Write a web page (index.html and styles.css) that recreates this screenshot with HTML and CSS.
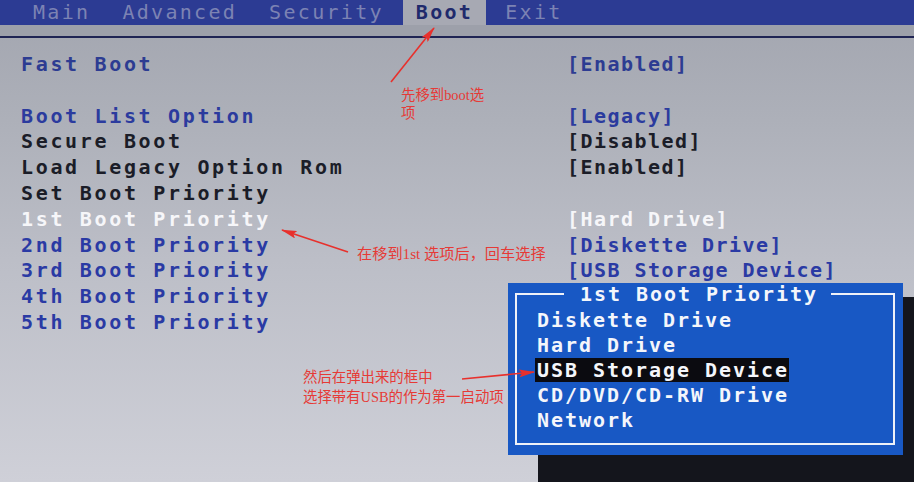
FILE: index.html
```html
<!DOCTYPE html>
<html lang="zh-CN">
<head>
<meta charset="utf-8">
<title>BIOS Boot</title>
<link rel="stylesheet" href="styles.css">
</head>
<body>
<div class="screen">
  <nav class="tabs">
    <span class="tab">Main</span>
    <span class="tab">Advanced</span>
    <span class="tab">Security</span>
    <span class="tab active">Boot</span>
    <span class="tab">Exit</span>
  </nav>
  <div class="band"></div>

  <main class="settings">
    <span class="lbl blue">Fast Boot</span><span class="val blue">[Enabled]</span>
    <span class="lbl"></span><span class="val"></span>
    <span class="lbl blue2">Boot List Option</span><span class="val blue2">[Legacy]</span>
    <span class="lbl dark">Secure Boot</span><span class="val dark">[Disabled]</span>
    <span class="lbl dark">Load Legacy Option Rom</span><span class="val dark">[Enabled]</span>
    <span class="lbl dark">Set Boot Priority</span><span class="val"></span>
    <span class="lbl white">1st Boot Priority</span><span class="val white">[Hard Drive]</span>
    <span class="lbl blue3">2nd Boot Priority</span><span class="val blue3">[Diskette Drive]</span>
    <span class="lbl blue3">3rd Boot Priority</span><span class="val blue3">[USB Storage Device]</span>
    <span class="lbl blue3">4th Boot Priority</span><span class="val"></span>
    <span class="lbl blue3">5th Boot Priority</span><span class="val"></span>
  </main>

  <div class="popup">
    <fieldset class="frame">
      <legend class="title">1st Boot Priority</legend>
      <ul class="choices">
        <li>Diskette Drive</li>
        <li>Hard Drive</li>
        <li><span class="sel">USB Storage Device</span></li>
        <li>CD/DVD/CD-RW Drive</li>
        <li>Network</li>
      </ul>
    </fieldset>
  </div>

  <p class="note note1">先移到boot选<br>项</p>
  <p class="note note2">在移到1st 选项后，回车选择</p>
  <p class="note note3">然后在弹出来的框中<br>选择带有USB的作为第一启动项</p>

  <svg class="arrows" width="914" height="482" viewBox="0 0 914 482">
    <defs>
      <marker id="head" markerUnits="userSpaceOnUse" markerWidth="16" markerHeight="8" refX="15" refY="4" orient="auto">
        <path d="M0,0 L16,4 L0,8 L3,4 Z" fill="#e8302c"/>
      </marker>
    </defs>
    <line x1="391" y1="82" x2="434" y2="28" stroke="#e8302c" stroke-width="1.6" marker-end="url(#head)"/>
    <line x1="348" y1="252" x2="282" y2="230" stroke="#e8302c" stroke-width="1.6" marker-end="url(#head)"/>
    <line x1="462" y1="379" x2="534" y2="372" stroke="#e8302c" stroke-width="1.6" marker-end="url(#head)"/>
  </svg>
</div>
</body>
</html>
```
FILE: styles.css
```css
html, body {
  margin: 0;
  padding: 0;
}
body {
  width: 914px;
  height: 482px;
  overflow: hidden;
  font-family: "DejaVu Sans Mono", "Liberation Mono", monospace;
  font-weight: bold;
  font-size: 20px;
}
.screen {
  position: relative;
  width: 914px;
  height: 482px;
  overflow: hidden;
  background: linear-gradient(180deg, #a2a5af 0px, #adb0b9 120px, #bcbec7 260px, #cfd0d8 482px);
}

/* tab bar */
.tabs {
  display: flex;
  gap: 6px;
  height: 25px;
  padding-left: 20px;
  background: #2c3b93;
}
.tab {
  padding: 0 13px;
  line-height: 25px;
  letter-spacing: 2.3px;
  color: #7c83b3;
  font-weight: normal;
}
.tab.active {
  background: #a7a9b3;
  color: #1f2a6c;
  font-weight: bold;
}
.band {
  height: 11px;
  background: #9da0aa;
  border-bottom: 2px solid #1f2454;
}

/* settings list */
.settings {
  display: grid;
  grid-template-columns: 546px auto;
  grid-auto-rows: 25.8px;
  padding: 14px 0 0 21px;
  line-height: 25.8px;
  white-space: nowrap;
}
.lbl { letter-spacing: 2.66px; }
.val { letter-spacing: 1.46px; }
.blue  { color: #2d3c92; }
.blue2 { color: #2b3b9e; }
.blue3 { color: #2a3aa4; }
.dark  { color: #1b1d28; }
.white { color: #f6f6f9; }

/* popup */
.popup {
  position: absolute;
  left: 508px;
  top: 283px;
  width: 395px;
  height: 172px;
  box-sizing: border-box;
  padding: 0 8px 10px 7px;
  background: #1858c4;
  box-shadow: 30px 14px 0 #14151c, 30px 30px 0 #14151c;
  color: #f4f6fb;
}
.frame {
  margin: 0;
  height: 100%;
  box-sizing: border-box;
  border: 2px solid #eef1f8;
  padding: 3px 0 0 20px;
  min-width: 0;
}
.title {
  margin-left: 27px;
  padding: 0 13px 0 16px;
  line-height: 22px;
  letter-spacing: 1.96px;
}
.choices {
  list-style: none;
  margin: 0;
  padding: 0;
  line-height: 25px;
  letter-spacing: 1.96px;
  white-space: nowrap;
}
.sel {
  display: inline-block;
  background: #0b0b10;
  margin-left: -2px;
  padding-left: 2px;
  line-height: 24px;
}

/* annotations */
.note {
  position: absolute;
  margin: 0;
  font-family: "Liberation Serif", "Noto Sans CJK SC", serif;
  font-weight: normal;
  font-size: 14.4px;
  line-height: 18px;
  color: #e63a36;
  white-space: nowrap;
}
.note1 { left: 401px; top: 86px; }
.note2 { left: 357px; top: 245px; font-size: 15.2px; }
.note3 { left: 303px; top: 367px; line-height: 20px; }
.arrows {
  position: absolute;
  left: 0;
  top: 0;
  pointer-events: none;
}
```
